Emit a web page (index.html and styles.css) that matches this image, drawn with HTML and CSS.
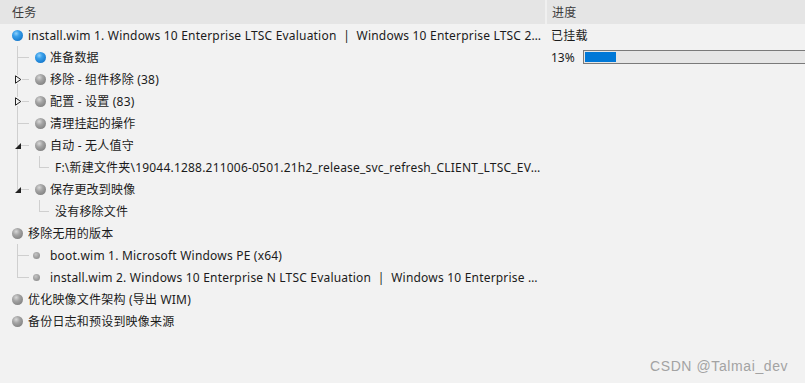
FILE: index.html
```html
<!DOCTYPE html>
<html lang="zh">
<head>
<meta charset="utf-8">
<title>Tasks</title>
<link rel="stylesheet" href="styles.css">
</head>
<body>
<div class="view">
  <div class="header">
    <div class="hcell task">任务</div>
    <div class="hsep"></div>
    <div class="hcell prog">进度</div>
  </div>

  <div class="row">
    <div class="cell task l0"><span class="dot blue"></span><span class="txt">install.wim 1. Windows 10 Enterprise LTSC Evaluation &nbsp;|&nbsp; Windows 10 Enterprise LTSC 2019 Evaluation</span></div>
    <div class="cell prog">已挂载</div>
  </div>

  <div class="row">
    <div class="cell task"><span class="g1 mid"></span><span class="dot blue"></span><span class="txt">准备数据</span></div>
    <div class="cell prog"><span class="pct">13%</span><span class="bar"><span class="fill" style="width:31px"></span></span></div>
  </div>

  <div class="row">
    <div class="cell task"><span class="g1 mid"><svg class="exp" width="7" height="9" viewBox="0 0 7 9"><path d="M0.5 0.8 L5.8 4.5 L0.5 8.2 Z" fill="#f2f2f2" stroke="#222" stroke-width="1"/></svg></span><span class="dot gray"></span><span class="txt">移除 - 组件移除 (38)</span></div>
    <div class="cell prog"></div>
  </div>

  <div class="row">
    <div class="cell task"><span class="g1 mid"><svg class="exp" width="7" height="9" viewBox="0 0 7 9"><path d="M0.5 0.8 L5.8 4.5 L0.5 8.2 Z" fill="#f2f2f2" stroke="#222" stroke-width="1"/></svg></span><span class="dot gray"></span><span class="txt">配置 - 设置 (83)</span></div>
    <div class="cell prog"></div>
  </div>

  <div class="row">
    <div class="cell task"><span class="g1 mid"></span><span class="dot gray"></span><span class="txt">清理挂起的操作</span></div>
    <div class="cell prog"></div>
  </div>

  <div class="row">
    <div class="cell task"><span class="g1 mid"><svg class="exp2" width="6" height="6" viewBox="0 0 6 6"><path d="M6 0 L6 6 L0 6 Z" fill="#222"/></svg></span><span class="dot gray"></span><span class="txt">自动 - 无人值守</span></div>
    <div class="cell prog"></div>
  </div>

  <div class="row">
    <div class="cell task"><span class="g1 pass"></span><span class="g2 last"></span><span class="txt">F:\新建文件夹\19044.1288.211006-0501.21h2_release_svc_refresh_CLIENT_LTSC_EVAL_x64FRE_zh-cn.iso</span></div>
    <div class="cell prog"></div>
  </div>

  <div class="row">
    <div class="cell task"><span class="g1 last"><svg class="exp2" width="6" height="6" viewBox="0 0 6 6"><path d="M6 0 L6 6 L0 6 Z" fill="#222"/></svg></span><span class="dot gray"></span><span class="txt">保存更改到映像</span></div>
    <div class="cell prog"></div>
  </div>

  <div class="row">
    <div class="cell task"><span class="g1"></span><span class="g2 last"></span><span class="txt">没有移除文件</span></div>
    <div class="cell prog"></div>
  </div>

  <div class="row">
    <div class="cell task l0"><span class="dot gray"></span><span class="txt">移除无用的版本</span></div>
    <div class="cell prog"></div>
  </div>

  <div class="row">
    <div class="cell task"><span class="g1 mid sm"></span><span class="bullet"></span><span class="txt">boot.wim 1. Microsoft Windows PE (x64)</span></div>
    <div class="cell prog"></div>
  </div>

  <div class="row">
    <div class="cell task"><span class="g1 last sm"></span><span class="bullet"></span><span class="txt">install.wim 2. Windows 10 Enterprise N LTSC Evaluation &nbsp;|&nbsp; Windows 10 Enterprise N LTSC 2019 Evaluation</span></div>
    <div class="cell prog"></div>
  </div>

  <div class="row">
    <div class="cell task l0"><span class="dot gray"></span><span class="txt">优化映像文件架构 (导出 WIM)</span></div>
    <div class="cell prog"></div>
  </div>

  <div class="row">
    <div class="cell task l0"><span class="dot gray"></span><span class="txt">备份日志和预设到映像来源</span></div>
    <div class="cell prog"></div>
  </div>

  <div class="watermark">CSDN @Talmai_dev</div>
</div>
</body>
</html>
```

FILE: styles.css
```css
html, body {
  margin: 0;
  padding: 0;
  background: #f2f2f2;
  overflow: hidden;
}
body {
  width: 805px;
  height: 383px;
  font-family: "Noto Sans", "Noto Sans CJK SC", sans-serif;
  font-size: 12px;
  letter-spacing: 0.2px;
  color: #1b1b1b;
}
.view {
  position: relative;
  width: 805px;
  height: 383px;
}
.header {
  display: flex;
  height: 24px;
  background: #e5e5e5;
}
.hcell {
  display: flex;
  align-items: center;
  color: #3c3c3c;
}
.hcell.task {
  width: 533px;
  padding-left: 12px;
}
.hsep {
  width: 2px;
  background: #f0f0f0;
}
.hcell.prog {
  flex: 1;
  padding-left: 5px;
}
.row {
  display: flex;
  height: 22px;
}
.cell {
  display: flex;
  align-items: center;
  height: 22px;
  white-space: nowrap;
  min-width: 0;
}
.cell.task {
  width: 545px;
  flex: none;
  overflow: hidden;
}
.cell.task.l0 {
  padding-left: 12px;
  width: 533px;
}
.cell.prog {
  flex: 1;
  padding-left: 6px;
  overflow: hidden;
}
.txt {
  overflow: hidden;
  text-overflow: ellipsis;
  white-space: nowrap;
  min-width: 0;
  flex: 1;
  padding-right: 3px;
}
.l0 .dot {
  margin-right: 5px;
}
.dot {
  flex: none;
  width: 11px;
  height: 11px;
  border-radius: 50%;
  margin-right: 4px;
}
.dot.blue {
  background: radial-gradient(circle at 38% 32%, #8fd0fb 0%, #3aa0ea 30%, #1b7fd2 70%, #1567b0 100%);
}
.dot.gray {
  background: radial-gradient(circle at 38% 32%, #d8d8d8 0%, #a4a4a4 35%, #858585 75%, #6e6e6e 100%);
}
.bullet {
  flex: none;
  width: 7px;
  height: 7px;
  border-radius: 50%;
  margin-right: 10px;
  background: radial-gradient(circle at 40% 35%, #c4c4c4 0%, #9a9a9a 60%, #888 100%);
}
/* tree guides */
.g1 {
  flex: none;
  width: 35px;
  height: 22px;
  display: flex;
  align-items: center;
  padding-left: 14px;
  box-sizing: border-box;
}
.g1.sm {
  width: 33px;
}
.g1.mid {
  background:
    linear-gradient(#cfcfcf, #cfcfcf) 17px 0 / 1px 22px no-repeat,
    linear-gradient(#cfcfcf, #cfcfcf) 17px 11px / 12px 1px no-repeat;
}
.g1.last {
  background:
    linear-gradient(#cfcfcf, #cfcfcf) 17px 0 / 1px 12px no-repeat,
    linear-gradient(#cfcfcf, #cfcfcf) 17px 11px / 12px 1px no-repeat;
}
.g1.pass {
  background: linear-gradient(#cfcfcf, #cfcfcf) 17px 0 / 1px 22px no-repeat;
}
.g2 {
  flex: none;
  width: 20px;
  height: 22px;
}
.g2.last {
  background:
    linear-gradient(#cfcfcf, #cfcfcf) 4px 0 / 1px 12px no-repeat,
    linear-gradient(#cfcfcf, #cfcfcf) 4px 11px / 10px 1px no-repeat;
}
.exp {
  display: block;
  margin-left: 1px;
  background: #f2f2f2;
}
.exp2 {
  display: block;
  margin-left: 1px;
  margin-top: 1px;
}
/* progress */
.pct {
  width: 32px;
  flex: none;
  letter-spacing: 0;
}
.bar {
  flex: none;
  display: block;
  width: 240px;
  height: 14px;
  box-sizing: border-box;
  border: 1px solid #7a7a7a;
  padding: 1px;
  background: #e6e6e6;
}
.fill {
  display: block;
  height: 10px;
  background: #0078d7;
}
.watermark {
  position: absolute;
  left: 650px;
  top: 358px;
  font-family: "Liberation Sans", Arial, sans-serif;
  font-size: 14px;
  letter-spacing: 0.6px;
  color: #a3a3a3;
}
```
